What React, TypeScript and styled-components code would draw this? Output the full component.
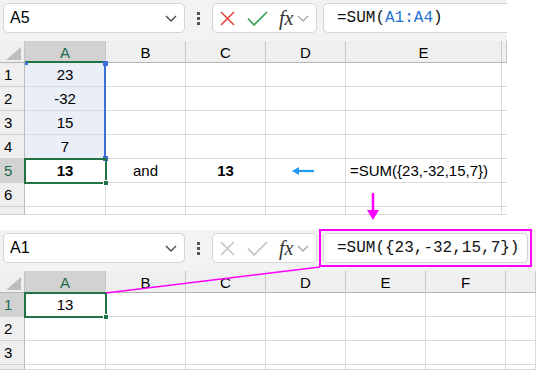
import React from 'react';
import styled, { createGlobalStyle } from 'styled-components';

const GlobalStyle = createGlobalStyle`
  body {
    margin: 0;
    background: #fff;
    font-family: "Liberation Sans", Arial, sans-serif;
  }
`;

const Page = styled.div`
  position: relative;
  width: 536px;
  height: 370px;
  overflow: hidden;
  display: flex;
  flex-direction: column;
  gap: 15px;
`;

const SheetWrap = styled.section<{ $w: number }>`
  width: ${p => p.$w}px;
  flex: none;
  display: flex;
  flex-direction: column;
  background: #f3f3f3;
`;

const FormulaBar = styled.div<{ $pr: number }>`
  height: 41px;
  box-sizing: border-box;
  padding: 3px ${p => p.$pr}px 8px 3px;
  display: flex;
  align-items: center;
`;

const NameBox = styled.div`
  width: 182px;
  height: 30px;
  box-sizing: border-box;
  border: 1px solid #d4d4d4;
  border-radius: 5px;
  background: #fff;
  display: flex;
  align-items: center;
  justify-content: space-between;
  padding: 0 7px 0 6px;
  font-size: 16px;
  color: #000;
`;

const Dots = styled.div`
  width: 27px;
  display: flex;
  flex-direction: column;
  align-items: center;
  gap: 2px;
  span {
    width: 3px;
    height: 3px;
    background: #555;
  }
`;

const FxBox = styled.div`
  width: 105px;
  height: 30px;
  box-sizing: border-box;
  border: 1px solid #d4d4d4;
  border-radius: 5px;
  background: #fff;
  display: flex;
  align-items: center;
  padding-left: 7px;
`;

const Fx = styled.span`
  font-family: "Liberation Serif", "Times New Roman", serif;
  font-style: italic;
  font-size: 20px;
  color: #333;
  margin: 0 4px 0 11px;
`;

const MarkFrame = styled.div<{ $marked?: boolean }>`
  flex: 1;
  display: flex;
  margin: ${p => (p.$marked ? '-4px 0 -4px 2px' : '0 0 0 6px')};
  padding: ${p => (p.$marked ? '2px' : '0')};
  border: ${p => (p.$marked ? '2px solid #ff00ff' : 'none')};
`;

const FormulaBox = styled.div<{ $open?: boolean }>`
  flex: 1;
  height: 30px;
  box-sizing: border-box;
  border: 1px solid #d4d4d4;
  border-right: ${p => (p.$open ? 'none' : '1px solid #d4d4d4')};
  border-radius: ${p => (p.$open ? '5px 0 0 5px' : '5px')};
  background: #fff;
  display: flex;
  align-items: center;
  padding-left: 13px;
  font-family: "Liberation Mono", "Courier New", monospace;
  font-size: 16px;
  color: #111;
  white-space: nowrap;
`;

const Ref = styled.span`
  color: #2271d1;
`;

const Grid = styled.div`
  position: relative;
  background: #fff;
`;

const Row = styled.div<{ $h: number }>`
  display: flex;
  height: ${p => p.$h}px;
  overflow: hidden;
`;

const Corner = styled.div`
  width: 25px;
  flex: none;
  box-sizing: border-box;
  background: #efefef;
  border-right: 1px solid #c4c4c4;
  border-bottom: 1px solid #b4b4b4;
  display: flex;
  align-items: flex-end;
  justify-content: flex-end;
  padding: 0 3px 2px 0;
`;

const ColHeader = styled.div<{ $w: number; $active?: boolean; $underline?: boolean }>`
  width: ${p => p.$w}px;
  flex: none;
  box-sizing: border-box;
  background: ${p => (p.$active ? '#d2d2d2' : '#efefef')};
  border-right: 1px solid #c8c8c8;
  border-bottom: ${p => (p.$underline ? '2px solid #217346' : '1px solid #b4b4b4')};
  display: flex;
  align-items: center;
  justify-content: center;
  padding-top: 2px;
  font-size: 15px;
  color: ${p => (p.$active ? '#1b6b4a' : '#000')};
`;

const RowHeader = styled.div<{ $active?: boolean }>`
  width: 25px;
  flex: none;
  box-sizing: border-box;
  background: ${p => (p.$active ? '#d2d2d2' : '#efefef')};
  border-right: 1px solid #bdbdbd;
  border-bottom: 1px solid #d0d0d0;
  display: flex;
  align-items: center;
  padding-left: 4px;
  font-size: 15px;
  color: ${p => (p.$active ? '#1b6b4a' : '#000')};
`;

const Cell = styled.div<{ $w: number; $fill?: boolean; $bold?: boolean; $left?: boolean }>`
  width: ${p => p.$w}px;
  flex: none;
  box-sizing: border-box;
  border-right: 1px solid #dadada;
  border-bottom: 1px solid #dadada;
  background: ${p => (p.$fill ? '#e9eef7' : '#fff')};
  display: flex;
  align-items: center;
  justify-content: ${p => (p.$left ? 'flex-start' : 'center')};
  padding: 0 4px;
  font-size: 15px;
  font-weight: ${p => (p.$bold ? 700 : 400)};
  color: #000;
  white-space: nowrap;
`;

const Selection = styled.div<{ $top: number }>`
  position: absolute;
  left: 24px;
  top: ${p => p.$top}px;
  width: 83px;
  height: 26px;
  box-sizing: border-box;
  border: 2px solid #217346;
  pointer-events: none;
`;

const FillHandle = styled.div<{ $top: number }>`
  position: absolute;
  left: 103px;
  top: ${p => p.$top}px;
  width: 6px;
  height: 6px;
  background: #217346;
  border: 1px solid #fff;
  box-sizing: border-box;
`;

const RangeEdge = styled.div`
  position: absolute;
  left: 104px;
  top: 22px;
  width: 2px;
  height: 96px;
  background: #3a6fd6;
`;

const RangeDot = styled.div<{ $x: number; $y: number; $s: number }>`
  position: absolute;
  left: ${p => p.$x}px;
  top: ${p => p.$y}px;
  width: ${p => p.$s}px;
  height: ${p => p.$s}px;
  background: #3a6fd6;
`;

const Annotations = styled.svg`
  position: absolute;
  left: 0;
  top: 0;
  pointer-events: none;
`;

const Chevron = ({ color }: { color: string }) => (
  <svg width="12" height="7" viewBox="0 0 12 7">
    <path d="M1 1l5 5 5-5" fill="none" stroke={color} strokeWidth="1.3" />
  </svg>
);

const Cross = ({ color }: { color: string }) => (
  <svg width="15" height="15" viewBox="0 0 15 15">
    <path d="M1 1l13 13M14 1L1 14" stroke={color} strokeWidth="1.6" />
  </svg>
);

const Check = ({ color }: { color: string }) => (
  <svg width="21" height="15" viewBox="0 0 21 15" style={{ marginLeft: 12 }}>
    <path d="M1 7.5l6 6.5L20 1" fill="none" stroke={color} strokeWidth="1.7" />
  </svg>
);

type CellData = { v?: React.ReactNode; bold?: boolean; fill?: boolean; left?: boolean };

type SheetProps = {
  width: number;
  name: string;
  formula: React.ReactNode;
  active: boolean;
  marked?: boolean;
  open?: boolean;
  cols: { label: string; w: number }[];
  activeRow: number;
  underlineA?: boolean;
  rows: { h: number; cells: CellData[] }[];
  children?: React.ReactNode;
};

const Sheet = ({ width, name, formula, active, marked, open, cols, activeRow, underlineA, rows, children }: SheetProps) => (
  <SheetWrap $w={width}>
    <FormulaBar $pr={open ? 0 : 4}>
      <NameBox>
        {name}
        <Chevron color="#444" />
      </NameBox>
      <Dots>
        <span />
        <span />
        <span />
      </Dots>
      <FxBox>
        <Cross color={active ? '#e5473f' : '#c4c4c4'} />
        <Check color={active ? '#3aa455' : '#c4c4c4'} />
        <Fx>fx</Fx>
        <Chevron color="#a8a8a8" />
      </FxBox>
      <MarkFrame $marked={marked}>
        <FormulaBox $open={open}>{formula}</FormulaBox>
      </MarkFrame>
    </FormulaBar>
    <Grid>
      <Row $h={22}>
        <Corner>
          <svg width="15" height="13" viewBox="0 0 15 13">
            <path d="M15 0V13H0Z" fill="#bdbdbd" />
          </svg>
        </Corner>
        {cols.map((c, i) => (
          <ColHeader key={i} $w={c.w} $active={c.label === 'A'} $underline={c.label === 'A' && underlineA}>
            {c.label}
          </ColHeader>
        ))}
      </Row>
      {rows.map((r, ri) => (
        <Row key={ri} $h={r.h}>
          <RowHeader $active={ri + 1 === activeRow}>{r.h > 12 ? ri + 1 : ''}</RowHeader>
          {cols.map((c, ci) => {
            const d = r.cells[ci] || {};
            return (
              <Cell key={ci} $w={c.w} $fill={d.fill} $bold={d.bold} $left={d.left}>
                {d.v}
              </Cell>
            );
          })}
        </Row>
      ))}
      {children}
    </Grid>
  </SheetWrap>
);

const BlueArrow = () => (
  <svg width="24" height="10" viewBox="0 0 24 10" style={{ marginLeft: -6 }}>
    <path d="M23 5H4" stroke="#1e98f0" strokeWidth="2.2" />
    <path d="M1 5l7-4v8z" fill="#1e98f0" />
  </svg>
);

const topCols = [
  { label: 'A', w: 81 },
  { label: 'B', w: 80 },
  { label: 'C', w: 80 },
  { label: 'D', w: 80 },
  { label: 'E', w: 156 },
  { label: '', w: 5 },
];

const bottomCols = [
  { label: 'A', w: 81 },
  { label: 'B', w: 80 },
  { label: 'C', w: 80 },
  { label: 'D', w: 80 },
  { label: 'E', w: 80 },
  { label: 'F', w: 80 },
  { label: '', w: 30 },
];

const topRows = [
  { h: 24, cells: [{ v: '23', fill: true }] },
  { h: 24, cells: [{ v: '-32', fill: true }] },
  { h: 24, cells: [{ v: '15', fill: true }] },
  { h: 24, cells: [{ v: '7', fill: true }] },
  {
    h: 24,
    cells: [
      { v: '13', bold: true },
      { v: 'and' },
      { v: '13', bold: true },
      { v: <BlueArrow /> },
      { v: '=SUM({23,-32,15,7})', left: true },
    ],
  },
  { h: 24, cells: [] },
  { h: 8, cells: [] },
];

const bottomRows = [
  { h: 24, cells: [{ v: '13' }] },
  { h: 24, cells: [] },
  { h: 24, cells: [] },
  { h: 5, cells: [] },
];

const App = () => (
  <>
    <GlobalStyle />
    <Page>
      <Sheet
        width={507}
        name="A5"
        active
        open
        formula={
          <>
            =SUM(<Ref>A1:A4</Ref>)
          </>
        }
        cols={topCols}
        activeRow={5}
        underlineA
        rows={topRows}
      >
        <RangeEdge />
        <RangeDot $x={103} $y={20} $s={5} />
        <RangeDot $x={103} $y={115} $s={5} />
        <RangeDot $x={25} $y={21} $s={3} />
        <Selection $top={117} />
        <FillHandle $top={139} />
      </Sheet>
      <Sheet
        width={536}
        name="A1"
        active={false}
        marked
        formula="=SUM({23,-32,15,7})"
        cols={bottomCols}
        activeRow={1}
        rows={bottomRows}
      >
        <Selection $top={21} />
        <FillHandle $top={43} />
      </Sheet>
      <Annotations width="536" height="370" viewBox="0 0 536 370">
        <path d="M373 193V213" stroke="#ff00ff" strokeWidth="2.5" />
        <path d="M367 210h12l-6 10z" fill="#ff00ff" />
        <path d="M106 293L320 267" stroke="#ff00ff" strokeWidth="1.3" />
      </Annotations>
    </Page>
  </>
);

export default App;
